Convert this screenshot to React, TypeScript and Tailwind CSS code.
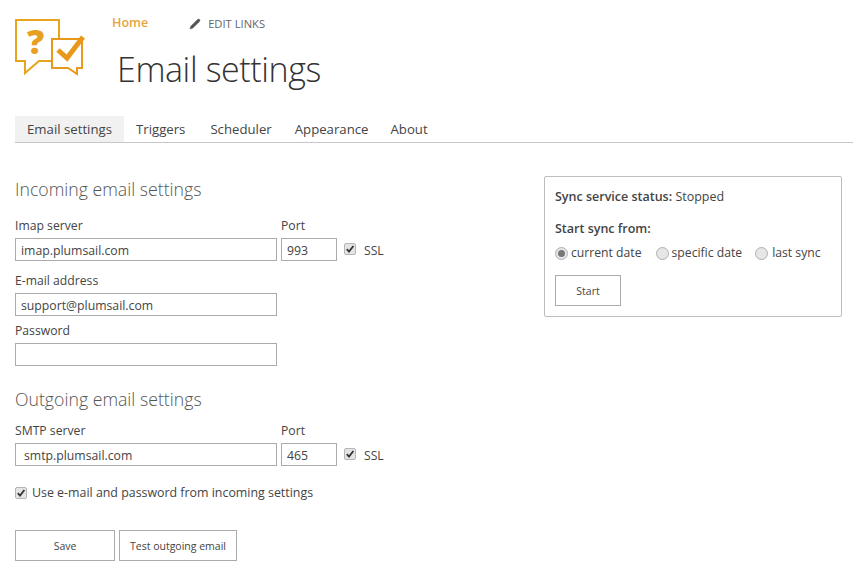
import { Pencil } from "lucide-react";

const font = { fontFamily: '"Open Sans", "Noto Sans", sans-serif' };

const Logo = () => (
  <svg width="72" height="60" viewBox="0 0 72 60" fill="none" className="shrink-0">
    <path d="M44 19V1H1V42H10V54L24 42H36" stroke="#e8a31f" strokeWidth="2" />
    <path d="M37 20H67V49H62V55L53 49H37Z" stroke="#e8981a" strokeWidth="2" />
    <path d="M43 31L52 39L68 18" stroke="#e8981a" strokeWidth="5" />
    <text x="12" y="35" fontSize="34" fontWeight="800" fill="#e8a020" fontFamily="Open Sans">?</text>
  </svg>
);

const Check = ({ className = "" }: { className?: string }) => (
  <span className={`flex h-[12px] w-[12px] shrink-0 items-center justify-center rounded-[2px] border border-[#b5b5b5] bg-[#e4e4e4] ${className}`}>
    <svg width="10" height="10" viewBox="0 0 10 10" fill="none">
      <path d="M1.8 5.2L4 7.6L8.4 2" stroke="#333" strokeWidth="1.8" />
    </svg>
  </span>
);

const Radio = ({ on = false }: { on?: boolean }) => (
  <span className="flex h-[13px] w-[13px] shrink-0 items-center justify-center rounded-full border border-[#b0b0b0] bg-[#e6e6e6]">
    {on && <span className="h-[7px] w-[7px] rounded-full bg-[#777]" />}
  </span>
);

const Field = ({ value = "", width, pad = "px-[5px]" }: { value?: string; width: string; pad?: string }) => (
  <input
    readOnly
    value={value}
    className={`h-[23px] border border-[#ababab] bg-white pt-[1px] text-[12.25px] text-[#444] outline-none ${pad} ${width}`}
  />
);

const labelClass = "h-[19px] text-[12.2px] leading-[14px] text-[#444]";

const ServerRow = ({ label, host, port, pad }: { label: string; host: string; port: string; pad?: string }) => (
  <div className="flex">
    <div className="mr-[4px] flex flex-col">
      <label className={labelClass}>{label}</label>
      <Field value={host} width="w-[262px]" pad={pad} />
    </div>
    <div className="flex flex-col">
      <label className={labelClass}>Port</label>
      <div className="flex items-center">
        <Field value={port} width="w-[56px]" />
        <Check className="ml-[7px] mb-[1px]" />
        <span className="ml-[8px] mt-[3px] text-[12.2px] text-[#444]">SSL</span>
      </div>
    </div>
  </div>
);

const Button = ({ children, width }: { children: string; width: string }) => (
  <button className={`h-[31px] border border-[#ababab] bg-white pt-[2px] text-[10.5px] text-[#444] ${width}`}>{children}</button>
);

const App = () => {
  const tabs = ["Triggers", "Scheduler", "Appearance", "About"];
  const tabGaps = ["ml-[12px]", "ml-[25px]", "ml-[23px]", "ml-[22px]"];

  return (
    <div style={font} className="h-[573px] w-[853px] overflow-hidden bg-white pt-[19px]">
      <header className="flex h-[97px] pl-[15px]">
        <Logo />
        <div className="ml-[25px] flex flex-col">
          <div className="-mt-[3px] flex items-center">
            <a className="text-[12.5px] leading-[10px] font-semibold text-[#e8a33d]">Home</a>
            <span className="ml-[41px] mt-[2px] flex items-center text-[11.2px] leading-[10px] text-[#666]">
              <Pencil size={12} fill="#555" strokeWidth={1} className="mr-[7px]" />
              EDIT LINKS
            </span>
          </div>
          <h1 className="ml-[5px] mt-[14px] text-[34px] leading-[50px] font-light tracking-[-0.4px] text-[#333]">Email settings</h1>
        </div>
      </header>

      <nav className="ml-[15px] flex h-[27px] items-center border-b border-[#c6c6c6] pt-[1px] text-[13.2px] text-[#444]">
        <span className="-mt-[1px] flex h-[26px] w-[109px] items-center justify-center bg-[#f1f1f1] pt-[1px]">Email settings</span>
        {tabs.map((t, i) => (
          <span key={t} className={tabGaps[i]}>{t}</span>
        ))}
      </nav>

      <main className="flex pl-[15px]">
        <section className="w-[529px] pt-[34px]">
          <h2 className="h-[42px] text-[17.7px] leading-[24px] font-light text-[#555]">Incoming email settings</h2>
          <ServerRow label="Imap server" host="imap.plumsail.com" port="993" />
          <div className="mt-[13px] flex flex-col">
            <label className={labelClass}>E-mail address</label>
            <Field value="support@plumsail.com" width="w-[262px]" />
          </div>
          <div className="mt-[8px] flex flex-col">
            <label className={labelClass}>Password</label>
            <Field width="w-[262px]" />
          </div>
          <h2 className="mt-[20px] h-[38px] text-[17.7px] leading-[26px] font-light text-[#555]">Outgoing email settings</h2>
          <ServerRow label="SMTP server" host="smtp.plumsail.com" port="465" pad="px-[8px]" />
          <div className="mt-[20px] flex items-center text-[12.4px] leading-[14px] text-[#444]">
            <Check className="mr-[5px]" />
            Use e-mail and password from incoming settings
          </div>
          <div className="mt-[30px] flex gap-[4px]">
            <Button width="w-[100px]">Save</Button>
            <Button width="w-[118px]">Test outgoing email</Button>
          </div>
        </section>

        <aside className="mt-[33px] h-[141px] w-[298px] rounded-[2px] border border-[#bdbdbd] px-[10px] pt-[11px] text-[12.5px] text-[#444]">
          <p className="h-[32px] leading-[18px]"><b className="font-semibold">Sync service status:</b> Stopped</p>
          <p className="h-[24px] leading-[18px] font-semibold">Start sync from:</p>
          <div className="flex h-[18px] items-center text-[12.2px]">
            <Radio on />
            <span className="ml-[3px]">current date</span>
            <span className="ml-[14px]"><Radio /></span>
            <span className="ml-[3px]">specific date</span>
            <span className="ml-[13px]"><Radio /></span>
            <span className="ml-[4px]">last sync</span>
          </div>
          <button className="mt-[13px] h-[31px] w-[66px] border border-[#ababab] bg-white pt-[2px] text-[10.5px]">Start</button>
        </aside>
      </main>
    </div>
  );
};

export default App;
